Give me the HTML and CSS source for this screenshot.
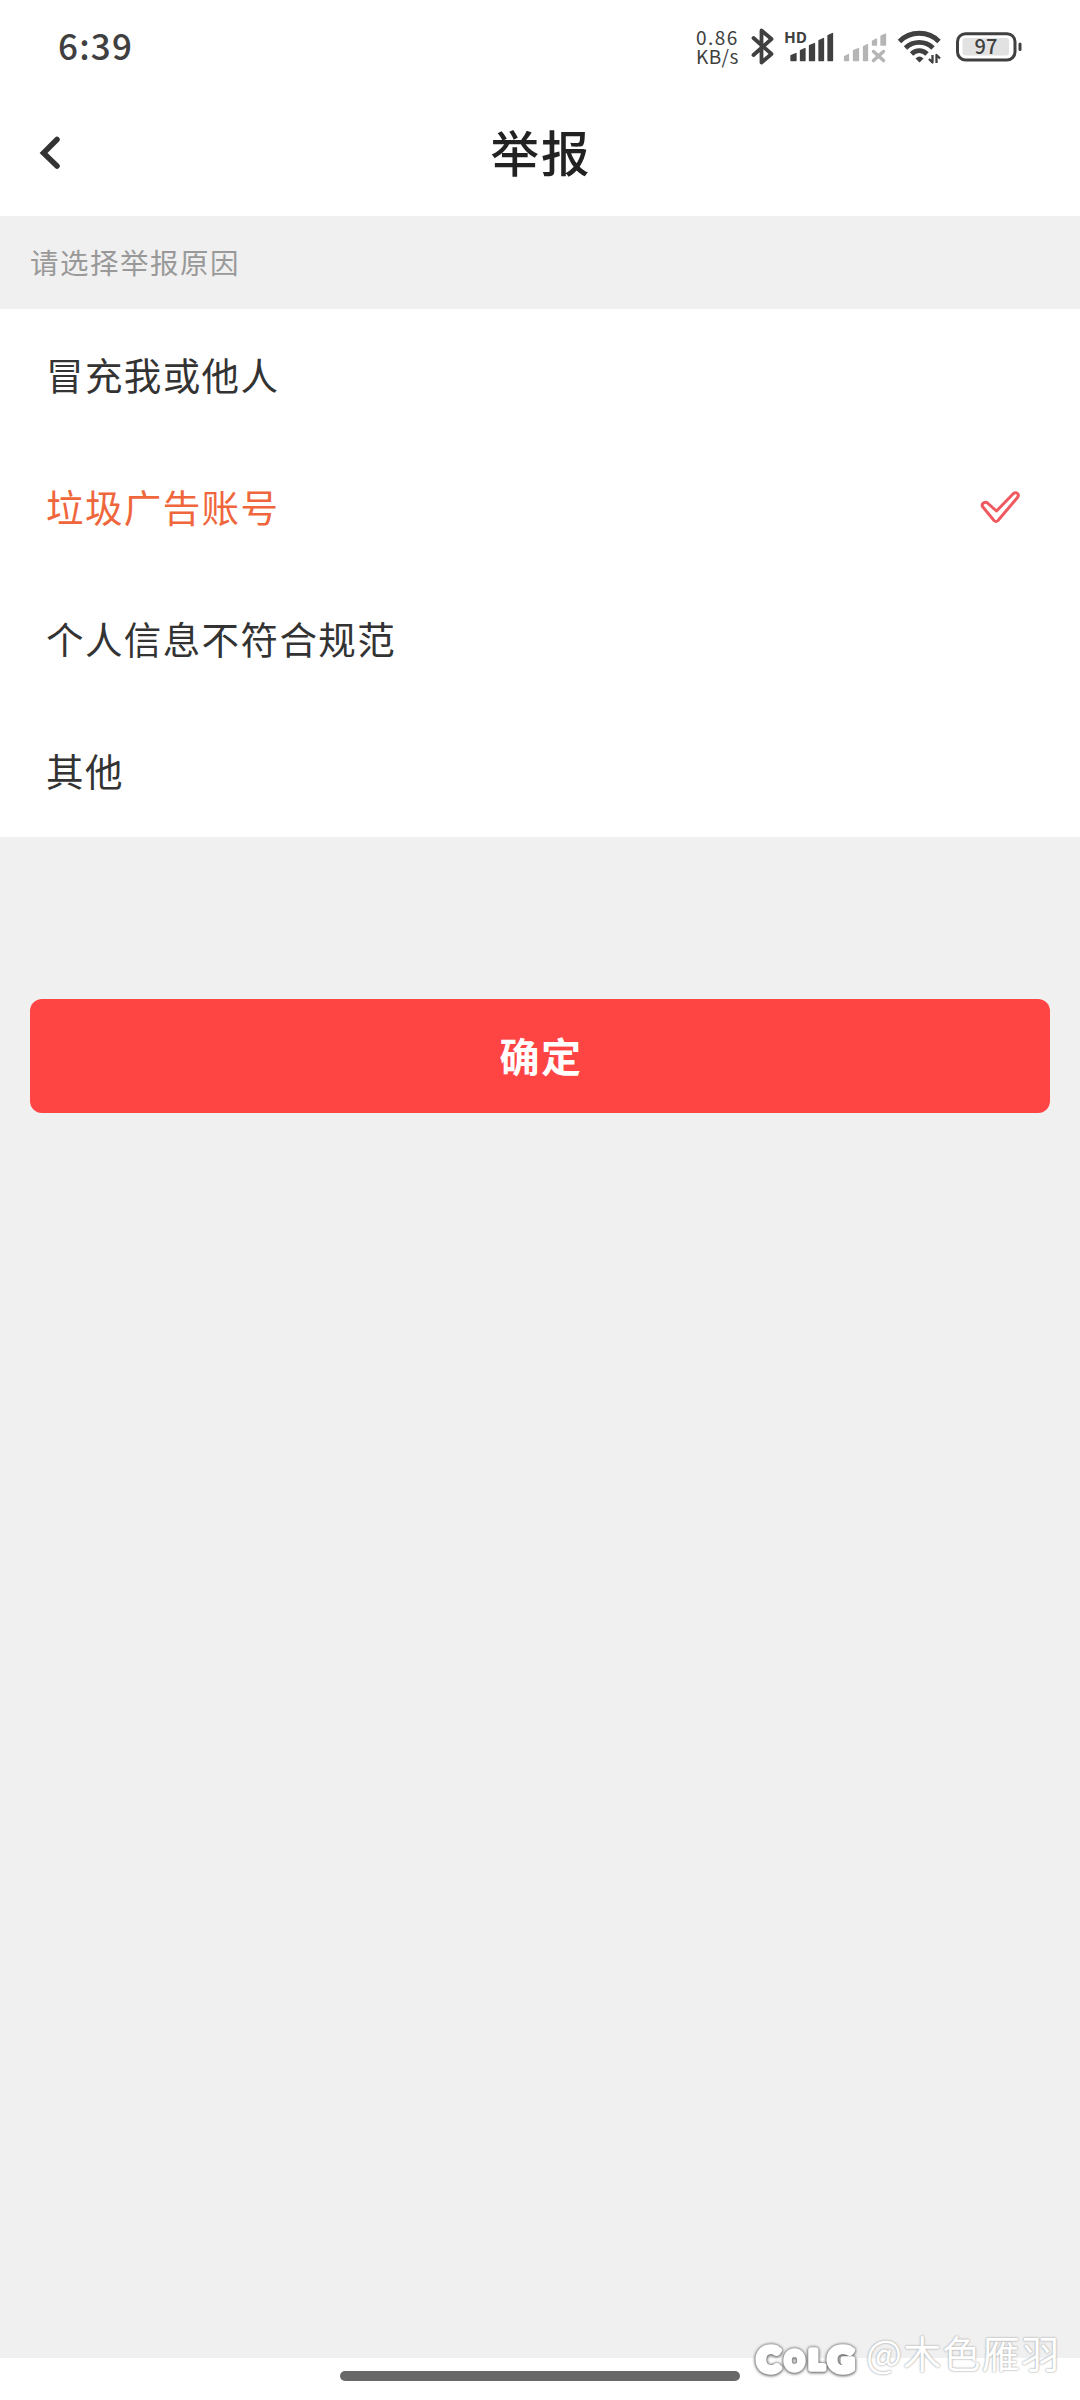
FILE: index.html
```html
<!DOCTYPE html>
<html lang="zh-CN">
<head>
<meta charset="utf-8">
<title>举报</title>
<link rel="stylesheet" href="styles.css">
</head>
<body>
<div class="screen">
  <div class="status">
    <span class="clock">6:39</span>
    <div class="speed"><span class="rate">0.86</span><span>KB/s</span></div>
    <svg class="icons" width="330" height="65" viewBox="0 0 330 65">
      <path class="bt" d="M3.5 23 21.500 39 11.500 47.500V15.500L21.500 24 3.500 40"/>
      <g class="bars">
        <path d="M41 45.500v-5l5-2v7zM50.500 45.500v-10l4.500-2v12zM59.500 45.500v-15l5-2v17zM69 45.500v-20l4.500-2v22zM78 45.500v-25l4.500-2v27z"/>
      </g>
      <g class="bars dim">
        <path d="M94.500 45.500v-4l4-2v6zM103.500 45.500v-10l5-2v12zM113.500 45.500v-14l4-2v16zM122.500 30v-4l4-2v6zM131 30v-9l4.500-2v11z"/>
        <path d="M123.500 36.500l10 9M133.500 36.500l-10 9"/>
      </g>
      <g class="wifi">
        <path d="M149.500 26.500C160 15.500 178.500 15.500 189 26.500"/>
        <path d="M155.500 33C163 25.500 175.500 25.500 183 33"/>
        <path d="M161.500 39C166 34.500 172.500 34.500 177 39"/>
      </g>
      <path class="solid" d="M169.500 47.500l-4-4q4-4 8 0z"/>
      <path class="traffic" d="M182.500 40v7.500l-3.500-3.500M186.500 48v-8l3.500 3.500"/>
      <rect class="cell" x="207.500" y="18.700" width="57.500" height="26.300" rx="8"/>
      <rect class="charge" x="212.500" y="23" width="46.500" height="17.500" rx="3"/>
      <rect class="solid" x="268.500" y="27.500" width="3" height="8.500" rx="1.500"/>
      <text class="hd" x="34" y="27.500" textLength="23" lengthAdjust="spacingAndGlyphs">HD</text>
      <text class="percent" x="236" y="39" text-anchor="middle">97</text>
    </svg>
  </div>
  <header class="header">
    <svg class="back" width="24" height="36" viewBox="0 0 24 36"><path d="M19 4.500 5.500 18 19 31"/></svg>
    <h1 class="title">举报</h1>
  </header>
  <div class="hint">请选择举报原因</div>
  <ul class="reasons">
    <li class="reason">冒充我或他人</li>
    <li class="reason selected">垃圾广告账号
      <svg class="check" width="42" height="36" viewBox="0 0 42 36"><path d="M2.500 17.500C1 15 5 12 7.500 14L16.500 22 33.500 4.500C36 2.500 40 5 37.500 8.500L18 31.500Q16 33.500 14 31.500Z"/></svg>
    </li>
    <li class="reason">个人信息不符合规范</li>
    <li class="reason">其他</li>
  </ul>
  <main class="action"><button class="confirm">确定</button></main>
  <footer class="nav"><div class="pill"></div></footer>
  <div class="mark">
    <svg class="logo" width="112" height="44" viewBox="0 0 112 44">
      <text x="7" y="34" font-size="35" textLength="23" lengthAdjust="spacingAndGlyphs">C</text>
      <text x="35" y="32" font-size="26" textLength="19" lengthAdjust="spacingAndGlyphs">O</text>
      <text x="59" y="31" font-size="27" textLength="15" lengthAdjust="spacingAndGlyphs">L</text>
      <text x="78" y="34" font-size="35" textLength="26" lengthAdjust="spacingAndGlyphs">G</text>
    </svg>
    <span class="author">@木色雁羽</span>
  </div>
</div>
</body>
</html>
```
FILE: styles.css
```css
* { box-sizing: border-box; }
body { margin: 0; font-family: "Noto Sans CJK SC", sans-serif; background: #f0f0f0; }
.screen { position: relative; width: 1080px; height: 2400px; display: flex; flex-direction: column; background: #f0f0f0; overflow: hidden; }

.status { height: 94px; display: flex; align-items: flex-start; background: #fff; color: #404040; }
.clock { width: 638px; padding: 22px 0 0 58px; font-size: 35px; font-weight: 500; line-height: 46px; letter-spacing: 1.200px; }
.speed { width: 52px; margin: 28px 0 0 58px; display: flex; flex-direction: column; font-size: 19px; line-height: 18.500px; letter-spacing: .4px; white-space: nowrap; }
.rate { letter-spacing: 1.500px; }
.icons { margin: 15px 0 0 2px; fill: none; stroke: #404040; stroke-linecap: round; stroke-linejoin: round; }
.bt { stroke-width: 3.800; }
.bars { fill: #404040; stroke-width: 1.300; }
.dim { fill: #b5b5b5; stroke: #b5b5b5; }
.dim path:last-child { stroke-width: 3.500; }
.wifi { stroke-width: 4.800; stroke-linecap: butt; }
.solid { fill: #404040; stroke: none; }
.traffic { stroke-width: 2.300; stroke-linecap: butt; }
.cell { stroke-width: 3; }
.charge { fill: #e2e2e2; stroke: none; }
.hd { fill: #404040; stroke: none; font-size: 15px; font-weight: 700; }
.percent { fill: #404040; stroke: none; font-size: 20px; font-weight: 500; }

.header { height: 122px; display: grid; grid-template-columns: 140px 1fr 140px; background: #fff; }
.back { margin: 41px 0 0 38px; fill: none; stroke: #333; stroke-width: 5.500; stroke-linecap: round; stroke-linejoin: miter; }
.title { margin: 21px 0 0; text-align: center; font-size: 48.500px; line-height: 72px; font-weight: 500; letter-spacing: 2px; text-indent: 2px; color: #222; }

.hint { height: 93px; padding-left: 30px; font-size: 28.500px; line-height: 92px; letter-spacing: 1.500px; color: #999; }
.reasons { margin: 0; padding: 0; list-style: none; background: #fff; }
.reason { height: 132px; padding: 0 58px 3px 46px; display: flex; align-items: center; justify-content: space-between; font-size: 37.500px; letter-spacing: 1.400px; color: #333; }
.selected { color: #f0663c; }
.check { margin-top: 3px; fill: #fff; stroke: #ef5a60; stroke-width: 3; stroke-linejoin: round; }

.action { flex: 1; padding: 162px 30px 0; }
.confirm { display: block; width: 100%; height: 114px; border: 0; border-radius: 12px; padding: 0 0 2px; background: #ff4444; color: #fff; font: 700 40px/112px "Noto Sans CJK SC", sans-serif; letter-spacing: 1.500px; text-indent: 2px; }
.nav { height: 42px; padding-top: 13px; background: #fff; }
.pill { width: 400px; height: 10px; margin: 0 auto; border-radius: 5px; background: #686868; }

.mark { position: absolute; left: 750px; top: 2330px; display: flex; color: #fff; }
.logo { margin-top: 8px; overflow: visible; filter: drop-shadow(0 0 1.500px #555) drop-shadow(0 1px 1px #999); }
.logo text { font-family: Lato, sans-serif; font-weight: 900; fill: #fff; stroke: #fff; stroke-width: 5.500; stroke-linejoin: round; }
.author { margin-left: 4px; margin-top: -3px; font-size: 38px; line-height: 50px; letter-spacing: 1.300px; white-space: nowrap; text-shadow: 0 0 2px #aaa, 0 0 2px #bbb; }
```
